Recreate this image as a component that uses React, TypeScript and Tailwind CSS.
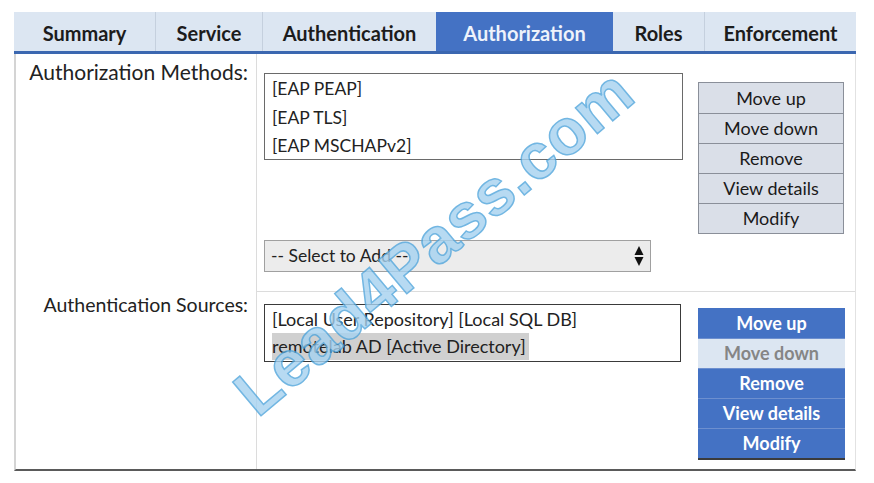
import type { ReactNode } from "react";

const tabs = [
  { label: "Summary", w: "w-[141px]" },
  { label: "Service", w: "w-[107px]" },
  { label: "Authentication", w: "w-[174px]" },
  { label: "Authorization", w: "w-[177px]", active: true },
  { label: "Roles", w: "w-[91px]" },
  { label: "Enforcement", w: "w-[152px]" },
];

const actions = ["Move up", "Move down", "Remove", "View details", "Modify"];

function GreyButtons() {
  return (
    <div className="flex w-[146px] flex-col border border-[#8a8f99] bg-[#dadfe8]">
      {actions.map((a, i) => (
        <div
          key={a}
          className={`flex h-[30px] items-center justify-center text-[18px] text-[#1a1a1a] ${
            i > 0 ? "border-t border-[#8a8f99]" : ""
          }`}
        >
          {a}
        </div>
      ))}
    </div>
  );
}

function BlueButtons() {
  return (
    <div className="flex w-[147px] flex-col border-b-2 border-[#3b3b3b]">
      {actions.map((a, i) => {
        const disabled = a === "Move down";
        return (
          <div
            key={a}
            className={`flex h-[30px] items-center justify-center text-[18px] font-bold ${
              disabled
                ? "bg-[#dce6f2] text-[#858585]"
                : "bg-[#4472c4] text-white"
            } ${i > 0 ? "border-t border-[#6d8fcf]" : ""}`}
          >
            {a}
          </div>
        );
      })}
    </div>
  );
}

function Label({ children, size }: { children: ReactNode; size: string }) {
  return (
    <div className={`pr-[8px] text-right leading-[26px] text-[#222] ${size}`}>
      {children}
    </div>
  );
}

export default function App() {
  return (
    <div className="relative h-[483px] w-[874px] overflow-hidden bg-white pl-[14px] pt-[12px] font-['Lato','Open_Sans',sans-serif]">
      {/* tab strip */}
      <div className="flex h-[42px] w-[842px] border-b-[3px] border-[#3b67b0] bg-[#dce6f2]">
        {tabs.map((t, i) => (
          <div
            key={t.label}
            className={`flex items-center justify-center pt-[3px] text-[20px] font-bold ${t.w} ${
              t.active
                ? "bg-[#4472c4] text-[#eef3fb]"
                : "text-[#1c1c1c]"
            } ${i > 0 && !t.active && !tabs[i - 1].active ? "border-l border-[#c5d0de]" : ""}`}
          >
            {t.label}
          </div>
        ))}
      </div>

      {/* body */}
      <div className="grid w-[842px] grid-cols-[240px_1fr] grid-rows-[237px_178px] border-b-2 border-l-2 border-r border-b-[#5a5a5a] border-l-[#d4d4d4] border-r-[#e2e2e2]">
        <div className="pt-[5px]">
          <Label size="text-[21px]">Authorization Methods:</Label>
        </div>
        <div className="flex border-l border-[#dcdcdc] pl-[7px]">
          <div className="flex w-[420px] flex-col">
            <div className="mt-[19px] h-[87px] w-[419px] border border-[#6a6a6a] px-[7px] pt-[1px] text-[17.5px] leading-[28.5px] text-[#222]">
              <div>[EAP PEAP]</div>
              <div>[EAP TLS]</div>
              <div>[EAP MSCHAPv2]</div>
            </div>
            <div className="mt-[80px] flex h-[32px] w-[387px] items-center justify-between border border-[#a0a0a0] bg-[#ececec] pl-[6px] pr-[6px] text-[17.5px] text-[#222]">
              <span>-- Select to Add --</span>
              <svg width="10" height="22" viewBox="0 0 10 22">
                <path d="M5 1 L9.5 10 L0.5 10 Z" fill="#111" />
                <path d="M5 21 L9.5 12 L0.5 12 Z" fill="#111" />
              </svg>
            </div>
          </div>
          <div className="ml-[14px] mt-[28px]">
            <GreyButtons />
          </div>
        </div>

        <div className="pt-[1px]">
          <Label size="text-[19.5px]">Authentication Sources:</Label>
        </div>
        <div className="flex border-l border-t border-[#dcdcdc] pl-[7px]">
          <div className="mt-[12px] h-[58px] w-[417px] border border-[#3a3a3a] px-[7px] pt-[1px] text-[18px] leading-[27px] text-[#222]">
            <div>[Local User Repository] [Local SQL DB]</div>
            <div className="inline-block bg-[#d0d0d0] pr-[3px]">
              remotelab AD [Active Directory]
            </div>
          </div>
          <div className="ml-[17px] mt-[16px]">
            <BlueButtons />
          </div>
        </div>
      </div>

      {/* watermark */}
      <div className="pointer-events-none absolute left-[434px] top-[242px] -translate-x-1/2 -translate-y-1/2 -rotate-[40deg] whitespace-nowrap font-['Liberation_Sans',sans-serif] text-[64px] font-bold tracking-[1px] text-[#a6d2f0] opacity-80 [-webkit-text-stroke:1.5px_#4fa5dc]">
        Lead4Pass.com
      </div>
    </div>
  );
}
